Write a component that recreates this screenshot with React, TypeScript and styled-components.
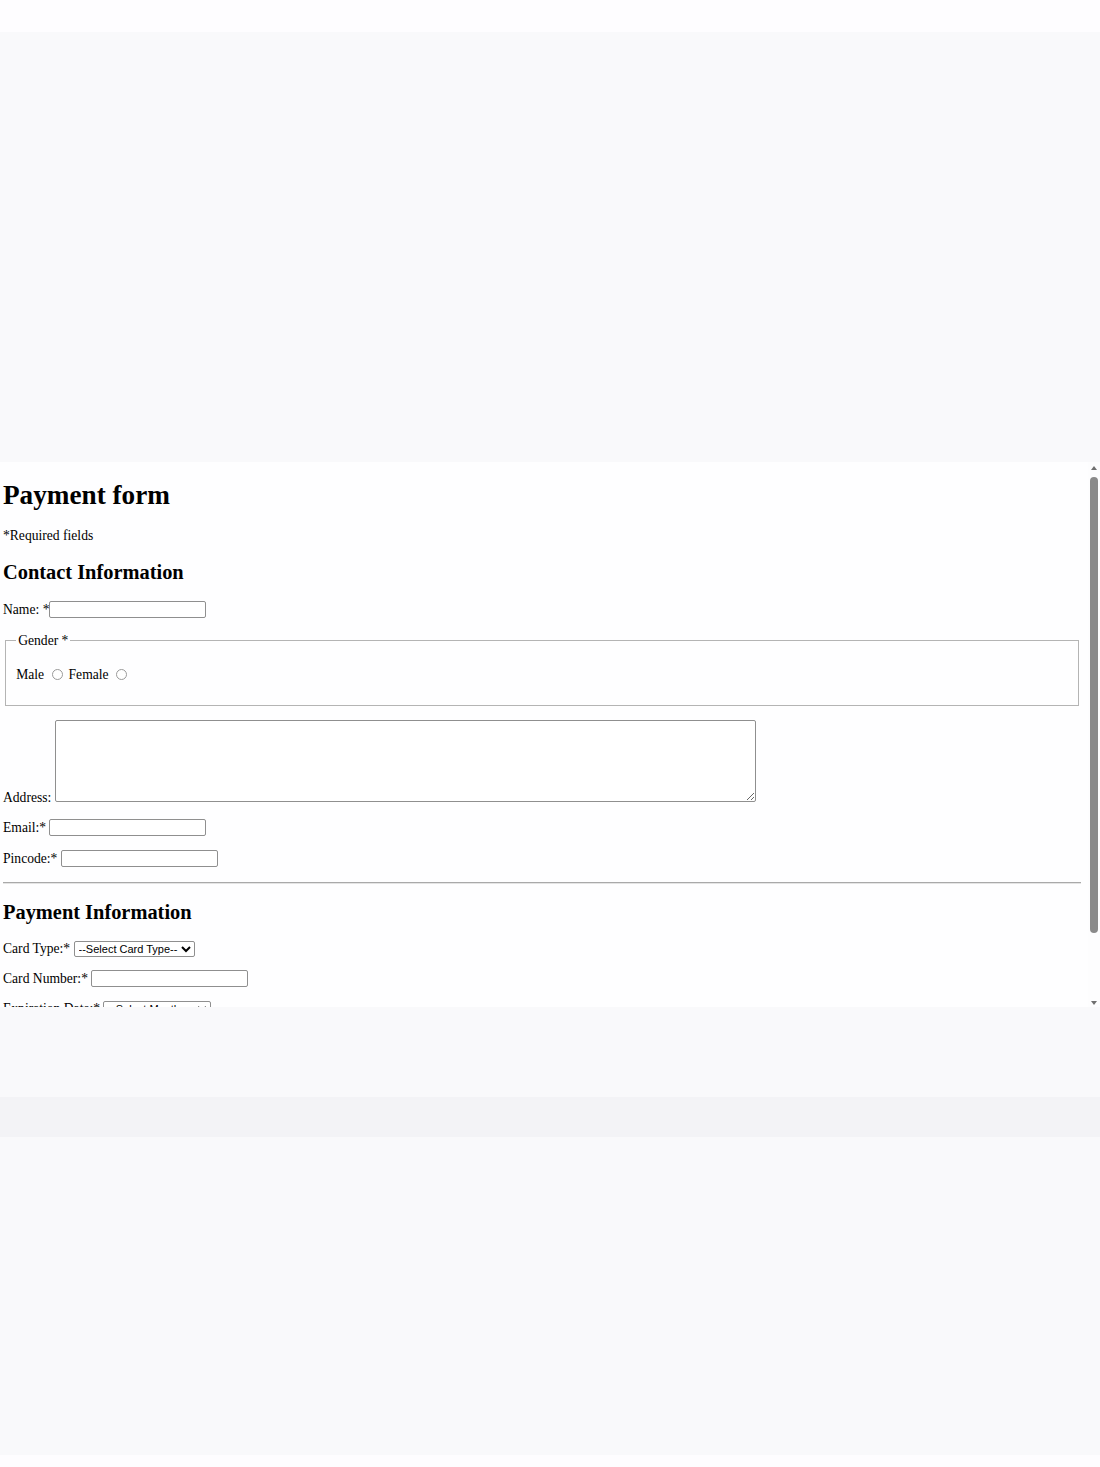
import React from 'react';
import styled, { createGlobalStyle } from 'styled-components';

// page chrome: the form sits in a framed, scrollable panel in the middle of a grey page
const GlobalStyle = createGlobalStyle`
  html, body {
    margin: 0;
    padding: 0;
    background: #f9f9fb;
  }
`;

const tones: Record<string, string> = {
  light: '#fefdff',
  base: '#f9f9fb',
  shade: '#f3f3f6',
};

const App = () => {
  return (
    <Page>
      <GlobalStyle />
      <Band $tone="light" $h={32} />
      <Band $tone="base" $h={430} />
      <Frame>
        <Viewport>
          <Title>Payment form</Title>
          <Note>*Required fields</Note>

          <Section>Contact Information</Section>
          <Row>
            Name: *<TextInput type="text" name="name" />
          </Row>
          <Group>
            <Legend>Gender *</Legend>
            <Options>
              <Option>
                Male <Radio type="radio" name="gender" value="male" />
              </Option>
              <Option>
                Female <Radio type="radio" name="gender" value="female" />
              </Option>
            </Options>
          </Group>
          <AreaRow>
            Address: <Area name="address" />
          </AreaRow>
          <Row>
            Email:* <TextInput type="email" name="email" />
          </Row>
          <Row>
            Pincode:* <TextInput type="text" name="pincode" />
          </Row>

          <Rule />

          <Section>Payment Information</Section>
          <Row $tight>
            Card Type:*{' '}
            <Select $w={121} defaultValue="">
              <option value="">--Select Card Type--</option>
              <option value="visa">Visa</option>
              <option value="rupay">RuPay</option>
              <option value="master">MasterCard</option>
            </Select>
          </Row>
          <Row $tight>
            Card Number:* <TextInput type="text" name="cardnumber" />
          </Row>
          <Row>
            Expiration Date:*{' '}
            <Select $w={108} defaultValue="">
              <option value="">--Select Month--</option>
              <option value="01">January</option>
              <option value="02">February</option>
            </Select>
          </Row>
          <Row>
            CVV:* <TextInput type="password" name="cvv" />
          </Row>
          <Row>
            <Submit type="button">Pay Now</Submit>
          </Row>
        </Viewport>
        <Scrollbar>
          <Arrow $dir="up" />
          <Track>
            <Thumb />
          </Track>
          <Arrow $dir="down" />
        </Scrollbar>
      </Frame>
      <Band $tone="base" $h={90} />
      <Band $tone="shade" $h={40} />
      <Band $tone="base" $h={318} />
      <Band $tone="light" $h={12} />
    </Page>
  );
};

const Page = styled.div`
  display: flex;
  flex-direction: column;
  width: 1100px;
`;

const Band = styled.div<{ $tone: string; $h: number }>`
  height: ${(p) => p.$h}px;
  background: ${(p) => tones[p.$tone]};
`;

const Frame = styled.div`
  display: flex;
  height: 545px;
  background: #fefeff;
`;

const Viewport = styled.div`
  flex: 1;
  overflow-y: auto;
  scrollbar-width: none;
  padding: 0 7px 0 3px;
  font-family: 'Liberation Serif', 'Times New Roman', serif;
  font-size: 13.6px;
  line-height: 16px;
  color: #000;

  &::-webkit-scrollbar {
    display: none;
  }
`;

const Title = styled.h1`
  font-size: 27.2px;
  line-height: 31px;
  font-weight: bold;
  margin: 18px 0 17px;
`;

const Note = styled.p`
  margin: 17px 0;
`;

const Section = styled.h2`
  font-size: 20.4px;
  line-height: 23px;
  font-weight: bold;
  margin: 17px 0;
`;

const Row = styled.p<{ $tight?: boolean }>`
  display: flex;
  align-items: center;
  white-space: pre;
  margin: ${(p) => (p.$tight ? '12.8px' : '13.8px')} 0;
`;

const TextInput = styled.input`
  box-sizing: border-box;
  width: 157px;
  height: 17px;
  margin: 0;
  padding: 1px 2px;
  border: 1px solid #8f8f8f;
  border-radius: 2px;
  background: #fff;
  font: 11.3px 'Liberation Sans', Arial, sans-serif;
`;

const Group = styled.fieldset`
  margin: 14.6px 2px 13.6px;
  padding: 4.8px 10.2px 8.5px;
  border: 1px solid #b4b4b4;
`;

const Legend = styled.legend`
  padding: 0 2px;
`;

const Options = styled.div`
  display: flex;
  align-items: center;
  margin: 13.6px 0;
`;

const Option = styled.label`
  display: flex;
  align-items: center;
  white-space: pre;
`;

const Radio = styled.input`
  appearance: none;
  box-sizing: border-box;
  width: 11px;
  height: 11px;
  margin: 0 6px 0 4px;
  border: 1px solid #9a9a9a;
  border-radius: 50%;
  background: #fff;
`;

const AreaRow = styled.p`
  margin: 13.6px 0;
`;

const Area = styled.textarea`
  box-sizing: border-box;
  width: 701px;
  height: 82px;
  margin: 0;
  vertical-align: baseline;
  border: 1px solid #8f8f8f;
  border-radius: 2px;
  background: #fff;
`;

const Rule = styled.hr`
  margin: 15px 0 14px;
  border: 0;
  border-top: 1px solid #a9a9a9;
  border-bottom: 1px solid #e4e4e4;
`;

const Select = styled.select<{ $w: number }>`
  box-sizing: border-box;
  width: ${(p) => p.$w}px;
  height: 16px;
  margin: 0;
  padding: 0;
  border: 1px solid #8f8f8f;
  border-radius: 2px;
  background: #fff;
  color: #000;
  font: 11px 'Liberation Sans', Arial, sans-serif;
`;

const Submit = styled.button`
  font: 11.3px 'Liberation Sans', Arial, sans-serif;
  padding: 1px 6px;
`;

const Scrollbar = styled.div`
  width: 12px;
  display: flex;
  flex-direction: column;
  background: #fdfdfe;
`;

const Arrow = styled.div<{ $dir: 'up' | 'down' }>`
  height: 12px;
  display: flex;
  justify-content: center;
  align-items: ${(p) => (p.$dir === 'up' ? 'flex-start' : 'flex-end')};
  padding: ${(p) => (p.$dir === 'up' ? '4px 0 0' : '0 0 2px')};
  box-sizing: border-box;

  &::before {
    content: '';
    width: 0;
    height: 0;
    border-left: 3.5px solid transparent;
    border-right: 3.5px solid transparent;
    ${(p) => (p.$dir === 'up' ? 'border-bottom' : 'border-top')}: 4px solid #6f6f6f;
  }
`;

const Track = styled.div`
  flex: 1;
  display: flex;
  justify-content: center;
  padding-top: 3px;
`;

const Thumb = styled.div`
  width: 8px;
  height: 456px;
  border-radius: 4px;
  background: #8a8a8a;
`;

export default App;
